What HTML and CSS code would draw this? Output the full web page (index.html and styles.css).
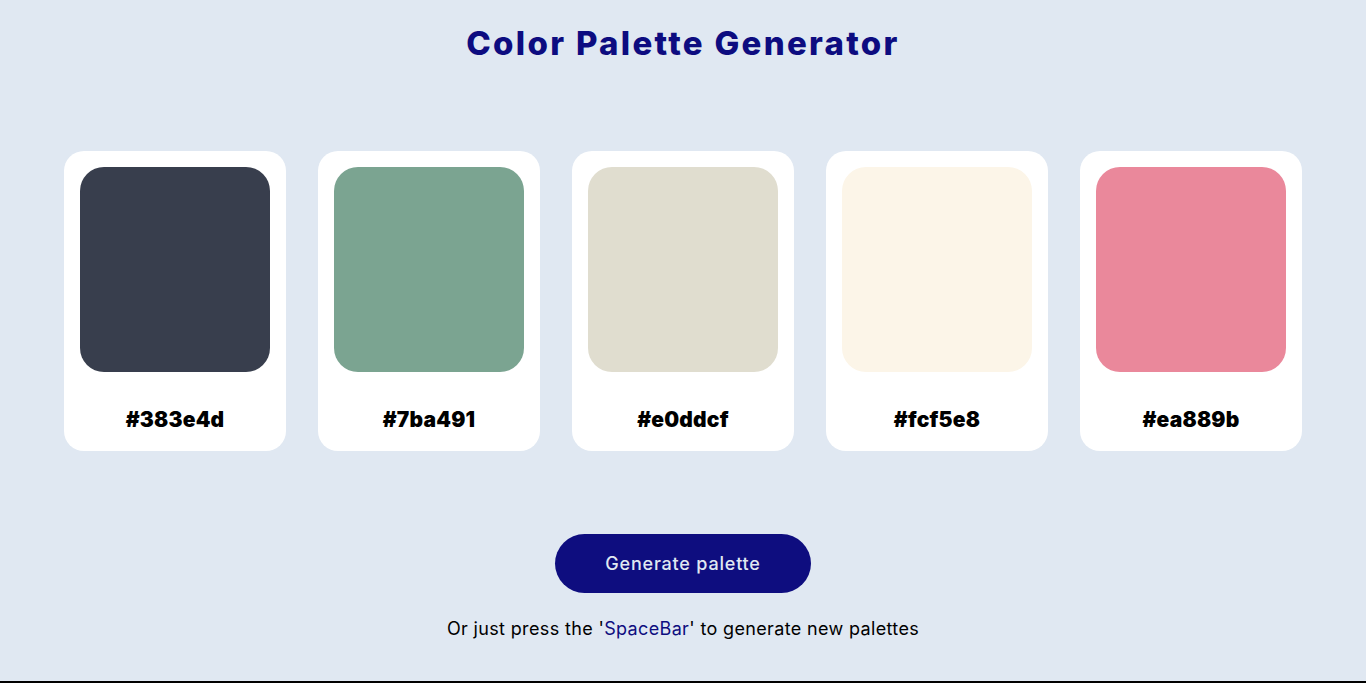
FILE: index.html
```html
<!DOCTYPE html>
<html lang="en">
<head>
<meta charset="utf-8">
<title>Color Palette Generator</title>
<link rel="stylesheet" href="styles.css">
</head>
<body>
<main class="page">
  <h1 class="title">Color Palette Generator</h1>
  <section class="palette">
    <div class="card"><div class="swatch" style="background:#383e4d"></div><p class="hex">#383e4d</p></div>
    <div class="card"><div class="swatch" style="background:#7ba491"></div><p class="hex">#7ba491</p></div>
    <div class="card"><div class="swatch" style="background:#e0ddcf"></div><p class="hex">#e0ddcf</p></div>
    <div class="card"><div class="swatch" style="background:#fcf5e8"></div><p class="hex">#fcf5e8</p></div>
    <div class="card"><div class="swatch" style="background:#ea889b"></div><p class="hex">#ea889b</p></div>
  </section>
  <button class="generate" type="button">Generate palette</button>
  <p class="hint">Or just press the '<span class="key">SpaceBar</span>' to generate new palettes</p>
</main>
</body>
</html>
```
FILE: styles.css
```css
* { box-sizing: border-box; }
html, body { margin: 0; padding: 0; }
body {
  background: #e0e8f2;
  font-family: Inter, "Open Sans", "DejaVu Sans", sans-serif;
  color: #000;
}
.page {
  height: 683px;
  border-bottom: 2px solid #000;
  display: flex;
  flex-direction: column;
  align-items: center;
}
.title {
  margin: 0;
  padding-top: 24px;
  line-height: 38px;
  font-size: 33px;
  font-weight: 800;
  letter-spacing: 2.3px;
  color: #0d0c80;
}
.palette {
  margin-top: 89px;
  display: flex;
  gap: 32px;
}
.card {
  width: 222px;
  height: 300px;
  background: #fff;
  border-radius: 20px;
  padding: 16px;
}
.swatch {
  width: 190px;
  height: 205px;
  border-radius: 24px;
}
.hex {
  margin: 36px 0 0;
  text-align: center;
  line-height: 24px;
  font-size: 21px;
  font-weight: 900;
  letter-spacing: 0.2px;
}
.generate {
  margin-top: 83px;
  width: 256px;
  height: 59px;
  border: none;
  border-radius: 30px;
  background: #0e0d7f;
  color: #e0e8f2;
  font-family: inherit;
  font-size: 18px;
  font-weight: 500;
  letter-spacing: 0.8px;
}
.hint {
  margin: 24px 0 0;
  line-height: 24px;
  font-size: 18px;
  font-weight: 400;
  letter-spacing: 0.35px;
}
.key { color: #0e0d7f; }
```
